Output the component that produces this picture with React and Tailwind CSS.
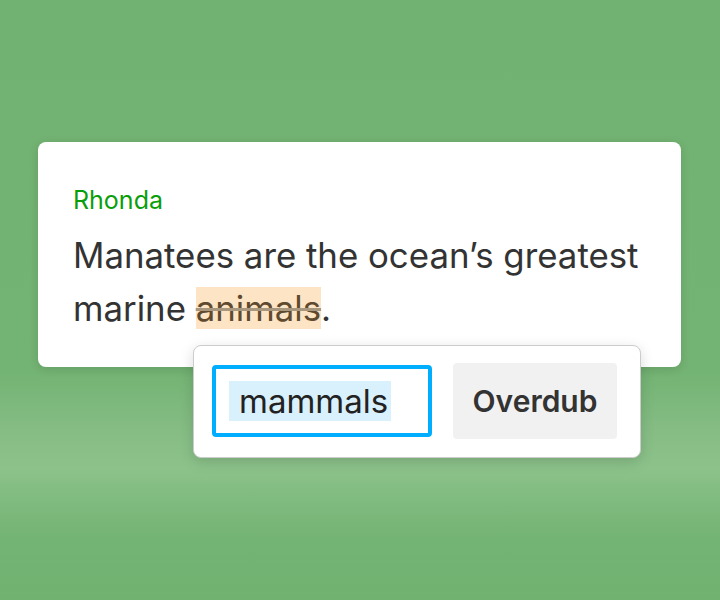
import React from "react";

export default function App() {
  return (
    <div className="h-[600px] w-[720px] overflow-hidden bg-[linear-gradient(180deg,#71b272_0%,#73b373_62%,#86bd85_72%,#8dc38b_78%,#80bb7f_83%,#73b373_90%,#71b271_100%)] font-['Inter','Liberation_Sans',sans-serif]">
      <div className="relative ml-[38px] mt-[142px] h-[225px] w-[643px] rounded-[8px] bg-white px-[35px] pt-[40px] shadow-[0_2px_10px_rgba(0,0,0,0.12)]">
        <p className="text-[25px] leading-[36px] text-[#0a9e0a]">Rhonda</p>
        <p className="mt-[11px] text-[34.8px] leading-[53px] text-[#333333]">
          Manatees are the ocean’s greatest marine{" "}
          <span className="bg-[#fde4c5] text-[#5f4a2f] line-through decoration-[#a8977f] decoration-[3px]">animals</span>.
        </p>

        <div className="absolute left-[155px] top-[203px] flex h-[113px] w-[448px] items-start gap-[21px] rounded-[8px] border border-[#cccccc] bg-white pl-[18px] pr-[23px] pt-[17px] shadow-[0_4px_14px_rgba(0,0,0,0.15)]">
          <div className="mt-[2px] flex h-[72px] w-[220px] items-center rounded-[4px] border-[4px] border-[#00aeff] pl-[13px]">
            <span className="bg-[#d9f0fd] pl-[10px] pr-[3px] text-[33px] leading-[40px] text-[#222222]">mammals</span>
          </div>
          <button className="flex h-[76px] w-[164px] items-center justify-center rounded-[4px] bg-[#f1f1f1] text-[30px] font-semibold text-[#333333]">
            Overdub
          </button>
        </div>
      </div>
    </div>
  );
}
